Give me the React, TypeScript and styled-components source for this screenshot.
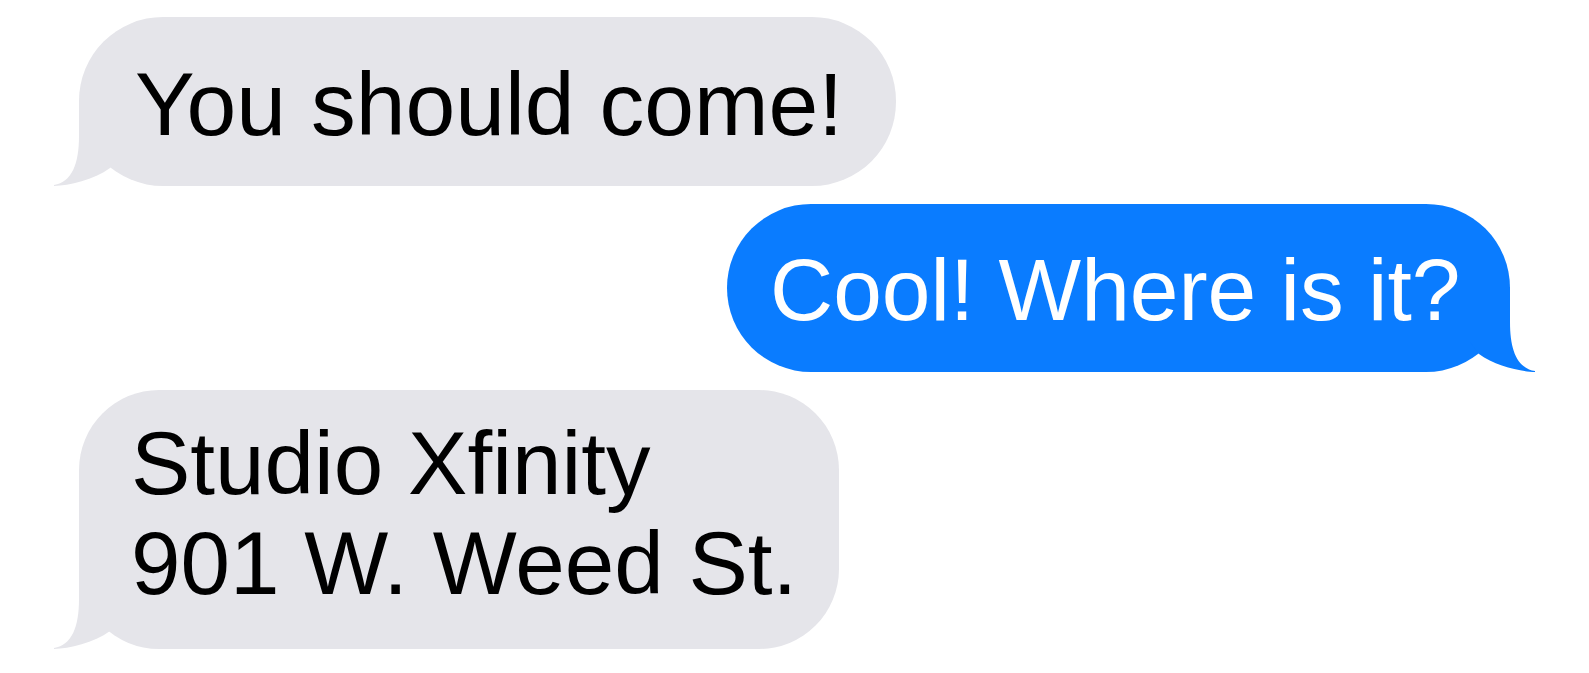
import React from "react";
import styled, { createGlobalStyle } from "styled-components";

const GlobalStyle = createGlobalStyle`
  html, body {
    margin: 0;
    padding: 0;
    background: #ffffff;
  }
  body {
    font-family: "Liberation Sans", Arial, Helvetica, sans-serif;
  }
`;

const Thread = styled.div`
  display: flex;
  flex-direction: column;
  gap: 18px;
  padding: 17px 79px 0 79px;
  width: 1589px;
  box-sizing: border-box;
`;

type Side = "them" | "me";

const Bubble = styled.div<{
  $side: Side;
  $pad: string;
  $size: number;
  $lh: number;
  $radius: number;
}>`
  position: relative;
  align-self: ${(p) => (p.$side === "me" ? "flex-end" : "flex-start")};
  background: ${(p) => (p.$side === "me" ? "#0a7cff" : "#e5e5ea")};
  color: ${(p) => (p.$side === "me" ? "#ffffff" : "#000000")};
  border-radius: ${(p) => p.$radius}px;
  padding: ${(p) => p.$pad};
  font-size: ${(p) => p.$size}px;
  line-height: ${(p) => p.$lh}px;
  white-space: nowrap;
`;

const Text = styled.div`
  position: relative;
  z-index: 1;
`;

const TailSvg = styled.svg<{ $side: Side }>`
  position: absolute;
  bottom: 0;
  width: 65px;
  height: 85px;
  ${(p) =>
    p.$side === "me"
      ? "right: -25px; transform: scaleX(-1);"
      : "left: -25px;"}
`;

const Tail: React.FC<{ side: Side; color: string }> = ({ side, color }) => (
  <TailSvg $side={side} viewBox="-25 -85 65 85" aria-hidden>
    <path
      d="M0 -85 L0 -50 C0 -22 -7 -4 -25 -1 L-25 0 C-10 -0.5 15 -6 31 -18 L40 -30 L40 -85 Z"
      fill={color}
    />
  </TailSvg>
);

export default function App() {
  return (
    <>
      <GlobalStyle />
      <Thread>
        <Bubble
          $side="them"
          $pad="37px 53px 32px 56px"
          $size={89.5}
          $lh={100}
          $radius={84}
        >
          <Tail side="them" color="#e5e5ea" />
          <Text>You should come!</Text>
        </Bubble>
        <Bubble
          $side="me"
          $pad="36px 49.5px 32px 43px"
          $size={87.5}
          $lh={100}
          $radius={84}
        >
          <Tail side="me" color="#0a7cff" />
          <Text>Cool! Where is it?</Text>
        </Bubble>
        <Bubble
          $side="them"
          $pad="23px 42px 36px 52px"
          $size={89}
          $lh={100}
          $radius={80}
        >
          <Tail side="them" color="#e5e5ea" />
          <Text>
            Studio Xfinity
            <br />
            901 W. Weed St.
          </Text>
        </Bubble>
      </Thread>
    </>
  );
}
